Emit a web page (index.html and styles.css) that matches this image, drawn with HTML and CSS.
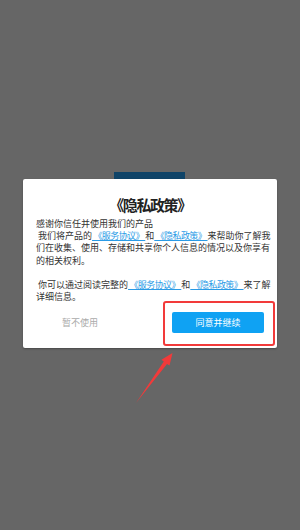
FILE: index.html
```html
<!DOCTYPE html>
<html lang="zh-CN">
<head>
<meta charset="utf-8">
<title>隐私政策</title>
<link rel="stylesheet" href="styles.css">
</head>
<body>
<div class="screen">
  <div class="behind"></div>
  <div class="dialog">
    <h1 class="title">《隐私政策》</h1>
    <p class="body">感谢你信任并使用我们的产品<br>&nbsp;我们将产品的<a class="link">&nbsp;《服务协议》&nbsp;</a>和<a class="link">&nbsp;《隐私政策》&nbsp;</a>来帮助你了解我<br>们在收集、使用、存储和共享你个人信息的情况以及你享有<br>的相关权利。<br><br>&nbsp;你可以通过阅读完整的<a class="link">&nbsp;《服务协议》&nbsp;</a>和<a class="link">&nbsp;《隐私政策》&nbsp;</a>来了解<br>详细信息。</p>
    <div class="actions">
      <button class="btn-decline">暂不使用</button>
      <button class="btn-agree">同意并继续</button>
    </div>
  </div>
  <svg class="annot" viewBox="0 0 300 530" width="300" height="530">
    <rect x="164" y="302" width="110" height="43" rx="2" fill="none" stroke="#f23a3a" stroke-width="2"/>
    <polygon points="136,403 167,363.9 169.5,365.6 172.5,353 161.4,359.7 163.8,361.5" fill="#f23a3a"/>
  </svg>
</div>
</body>
</html>
```
FILE: styles.css
```css
html, body {
  margin: 0;
  padding: 0;
  background: #666666;
}
.screen {
  position: relative;
  width: 300px;
  height: 530px;
  overflow: hidden;
  padding-top: 172px;
  box-sizing: border-box;
  font-family: "Noto Sans CJK SC", "Noto Sans", sans-serif;
}
.behind {
  width: 71px;
  height: 7px;
  margin-left: 114px;
  background: #0f4468;
}
.dialog {
  margin-left: 23px;
  width: 254px;
  height: 169px;
  background: #ffffff;
  border-radius: 2px;
  box-shadow: 0 1px 2px rgba(0,0,0,0.3);
  padding: 16px 13px 0 13px;
  box-sizing: border-box;
  display: flex;
  flex-direction: column;
}
.title {
  margin: 0;
  font-size: 15px;
  line-height: 20px;
  font-weight: bold;
  color: #222222;
  text-align: center;
  letter-spacing: -1.4px;
}
.body {
  margin: 3px 0 0 0;
  font-size: 9px;
  line-height: 12.2px;
  color: #333333;
  white-space: nowrap;
}
.link {
  color: #2a9be6;
  text-decoration: underline;
  letter-spacing: -0.6px;
}
.actions {
  margin-top: 9px;
  display: flex;
  justify-content: space-between;
  align-items: center;
}
.btn-decline {
  width: 88px;
  height: 21px;
  border: none;
  background: transparent;
  color: #aaaaaa;
  font-family: inherit;
  font-size: 9px;
  padding: 0;
}
.btn-agree {
  width: 92px;
  height: 21px;
  border: none;
  border-radius: 2px;
  background: #0fa2f3;
  color: #ffffff;
  font-family: inherit;
  font-size: 9px;
  padding: 0;
}
.annot {
  position: absolute;
  left: 0;
  top: 0;
}
```
